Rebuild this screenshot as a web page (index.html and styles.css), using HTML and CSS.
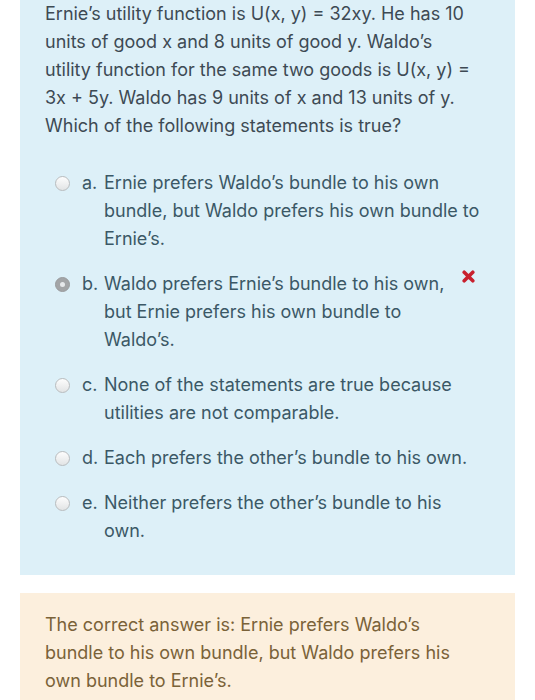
FILE: index.html
```html
<!DOCTYPE html>
<html>
<head>
<meta charset="utf-8">
<link rel="stylesheet" href="styles.css">
</head>
<body>
<div class="que">
  <p class="qtext">Ernie’s utility function is U(x, y) = 32xy. He has 10 units of good x and 8 units of good y. Waldo’s utility function for the same two goods is U(x, y) = 3x + 5y. Waldo has 9 units of x and 13 units of y. Which of the following statements is true?</p>
  <div class="answer">
    <div class="opt">
      <span class="radio"></span>
      <span class="num">a.</span>
      <span class="txt">Ernie prefers Waldo’s bundle to his own bundle, but Waldo prefers his own bundle to Ernie’s.</span>
    </div>
    <div class="opt">
      <span class="radio checked"></span>
      <span class="num">b.</span>
      <span class="txt">Waldo prefers Ernie’s bundle to his own, but Ernie prefers his own bundle to Waldo’s.</span>
      <svg class="wrong" viewBox="0 0 13 13" width="13" height="13"><path d="M2.2 2.2 L10.8 10.8 M10.8 2.2 L2.2 10.8" stroke="#c8202e" stroke-width="3.6" stroke-linecap="round"/></svg>
    </div>
    <div class="opt">
      <span class="radio"></span>
      <span class="num">c.</span>
      <span class="txt">None of the statements are true because utilities are not comparable.</span>
    </div>
    <div class="opt">
      <span class="radio"></span>
      <span class="num">d.</span>
      <span class="txt">Each prefers the other’s bundle to his own.</span>
    </div>
    <div class="opt">
      <span class="radio"></span>
      <span class="num">e.</span>
      <span class="txt">Neither prefers the other’s bundle to his own.</span>
    </div>
  </div>
</div>
<div class="feedback">
  <p class="right">The correct answer is: Ernie prefers Waldo’s bundle to his own bundle, but Waldo prefers his own bundle to Ernie’s.</p>
</div>
</body>
</html>
```
FILE: styles.css
```css
html, body {
  margin: 0;
  padding: 0;
  background: #ffffff;
}
body {
  font-family: Inter, "Open Sans", sans-serif;
  font-size: 18px;
  line-height: 28px;
}
.que {
  margin: 0 20px;
  background: #ddf0f8;
  padding: 0 35px 30px 25px;
}
.qtext {
  margin: 0;
  color: #3d4a54;
}
.answer {
  margin-top: 29px;
  color: #3b5866;
}
.opt {
  display: flex;
  align-items: flex-start;
  margin-bottom: 17px;
}
.opt:last-child {
  margin-bottom: 0;
}
.radio {
  flex: none;
  width: 13px;
  height: 13px;
  margin: 7px 12px 0 10px;
  border: 1px solid #b9bcbe;
  border-radius: 50%;
  background: linear-gradient(#fdfdfd, #e2e4e5);
  box-sizing: content-box;
  position: relative;
}
.radio.checked {
  background: #a3a5a7;
  border-color: #999b9d;
}
.radio.checked::after {
  content: "";
  position: absolute;
  left: 4px;
  top: 4px;
  width: 5px;
  height: 5px;
  border-radius: 50%;
  background: #e6e8ea;
}
.num {
  flex: none;
  width: 22px;
}
.txt {
  flex: 1;
}
.wrong {
  flex: none;
  margin: 0 5px 0 2px;
}
.feedback {
  margin: 18px 20px 0;
  background: #fcefdd;
  padding: 18px 35px 20px 25px;
}
.right {
  margin: 0;
  color: #7a6238;
}
```
